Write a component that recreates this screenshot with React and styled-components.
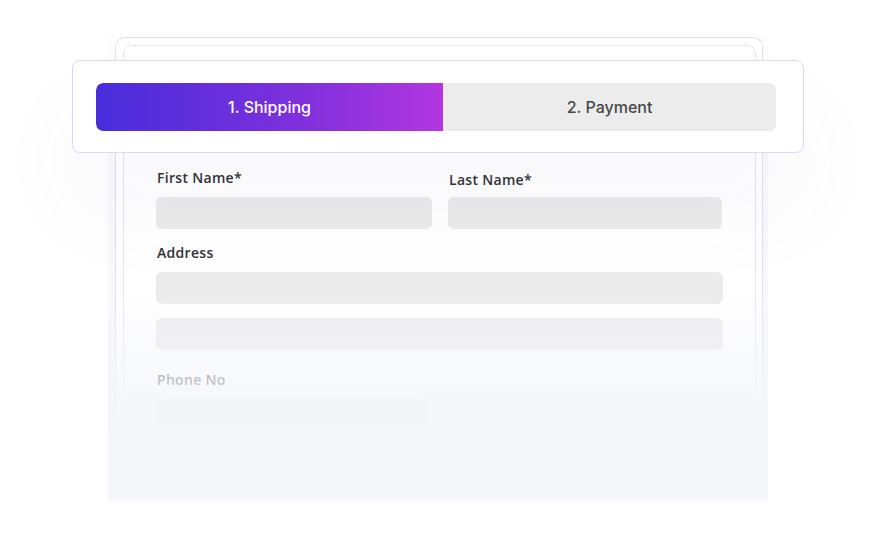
import styled, { createGlobalStyle } from "styled-components";

const GlobalStyle = createGlobalStyle`
  html, body {
    margin: 0;
    padding: 0;
    background: #ffffff;
    overflow: hidden;
  }
  * { box-sizing: border-box; }
`;

const Page = styled.div`
  width: 876px;
  height: 542px;
  padding: 37px 0 0 108px;
`;

const Panel = styled.div`
  position: relative;
  width: 660px;
  height: 463px;
  background: linear-gradient(to bottom, #fdfdfe 0%, #f8f8fb 45%, #f5f6fa 100%);
`;

const OuterCard = styled.div`
  margin: 0 5px 0 7px;
  height: 390px;
  padding: 7px 6px 0 7px;
  border: 1.5px solid #e2dcfc;
  border-bottom: none;
  border-radius: 10px 10px 0 0;
  background: #ffffff;
`;

const InnerCard = styled.div`
  height: 100%;
  padding: 122px 32px 0 32px;
  border: 1.5px solid #e6e1fd;
  border-bottom: none;
  border-radius: 9px 9px 0 0;
  background: #ffffff;
`;

const StepCard = styled.div`
  position: absolute;
  left: -36px;
  top: 23px;
  width: 732px;
  height: 93px;
  padding: 22px 27px 0 23px;
  background: #ffffff;
  border: 1.5px solid #ddd6fc;
  border-radius: 8px;
  box-shadow: 0 55px 90px rgba(100, 100, 150, 0.05);
  z-index: 2;
`;

const Tabs = styled.div`
  display: grid;
  grid-template-columns: 347px 1fr;
  height: 48px;
  border-radius: 7px;
  overflow: hidden;
  background: #ececec;
`;

const Tab = styled.div`
  display: flex;
  align-items: center;
  justify-content: center;
  font-family: Inter, "Liberation Sans", sans-serif;
  font-size: 16px;
  font-weight: 500;
  color: ${(p) => (p.$active ? "#ffffff" : "#474747")};
  background: ${(p) =>
    p.$active ? "linear-gradient(90deg, #482ddb 0%, #7a30dc 55%, #b236df 100%)" : "#ececec"};
  border-radius: ${(p) => (p.$active ? "7px 0 0 7px" : "0")};
`;

const Form = styled.div`
  display: flex;
  flex-direction: column;
`;

const Row = styled.div`
  display: grid;
  grid-template-columns: 276px 274px;
  gap: 16px;
  margin-bottom: ${(p) => p.$mb || 0}px;
`;

const Field = styled.div`
  display: flex;
  flex-direction: column;
  padding-top: ${(p) => p.$shift || 0}px;
`;

const Label = styled.div`
  font-family: "Open Sans", Lato, sans-serif;
  font-size: 14px;
  font-weight: 600;
  line-height: 20px;
  letter-spacing: 0.3px;
  color: #313134;
  margin-bottom: ${(p) => p.$mb ?? 9}px;
  padding-left: 1px;
`;

const Input = styled.div`
  height: 32px;
  width: ${(p) => p.$w || "100%"};
  border-radius: 6px;
  background: #ebebeb;
  margin-bottom: ${(p) => p.$mb || 0}px;
`;

const Fade = styled.div`
  position: absolute;
  left: 0;
  right: 0;
  top: 255px;
  bottom: 0;
  background: linear-gradient(
    to bottom,
    rgba(245, 246, 250, 0) 0%,
    rgba(245, 246, 250, 0.55) 30%,
    rgba(245, 246, 250, 0.92) 55%,
    #f5f6fa 70%
  );
  z-index: 1;
`;

export default function App() {
  return (
    <>
      <GlobalStyle />
      <Page>
        <Panel>
          <OuterCard>
            <InnerCard>
              <Form>
                <Row $mb={14}>
                  <Field>
                    <Label>First Name*</Label>
                    <Input />
                  </Field>
                  <Field $shift={2}>
                    <Label $mb={7}>Last Name*</Label>
                    <Input />
                  </Field>
                </Row>
                <Field>
                  <Label>Address</Label>
                  <Input $mb={14} />
                  <Input $mb={20} />
                  <Label>Phone No</Label>
                  <Input $w="272px" />
                </Field>
              </Form>
            </InnerCard>
          </OuterCard>
          <Fade />
          <StepCard>
            <Tabs>
              <Tab $active>1. Shipping</Tab>
              <Tab>2. Payment</Tab>
            </Tabs>
          </StepCard>
        </Panel>
      </Page>
    </>
  );
}
